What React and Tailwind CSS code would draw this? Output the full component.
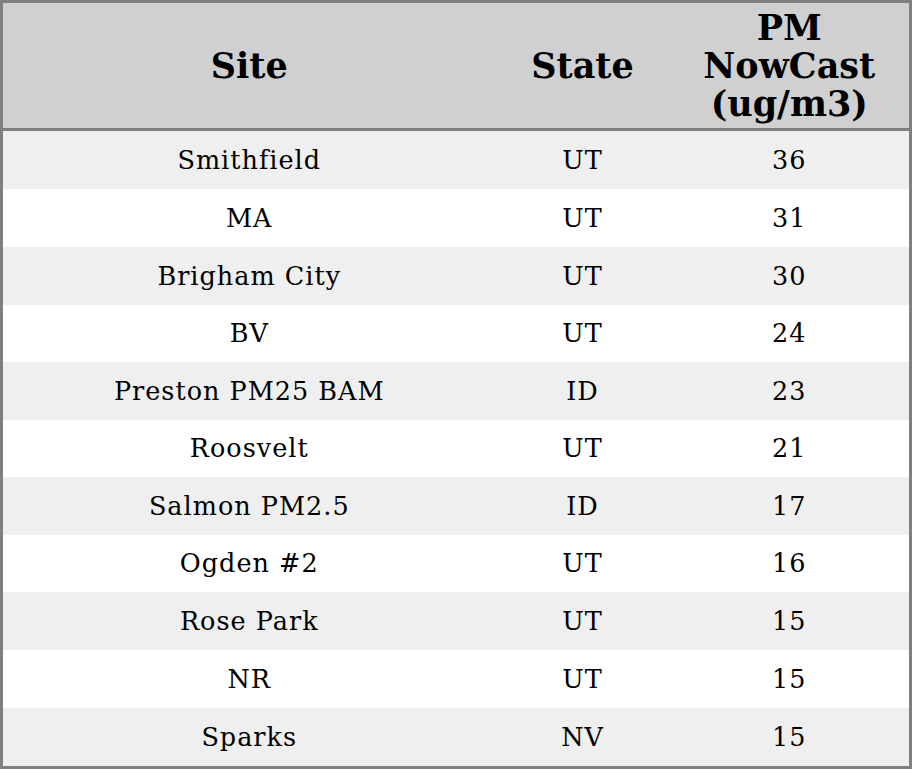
import React from 'react';

const rows = [
  ['Smithfield', 'UT', 36],
  ['MA', 'UT', 31],
  ['Brigham City', 'UT', 30],
  ['BV', 'UT', 24],
  ['Preston PM25 BAM', 'ID', 23],
  ['Roosvelt', 'UT', 21],
  ['Salmon PM2.5', 'ID', 17],
  ['Ogden #2', 'UT', 16],
  ['Rose Park', 'UT', 15],
  ['NR', 'UT', 15],
  ['Sparks', 'NV', 15],
];

export default function App() {
  return (
    <div className="w-[912px] h-[769px] bg-white font-['DejaVu_Serif',serif] text-black">
      <table className="w-full h-full border-[3px] border-[#808080] border-collapse">
        <thead>
          <tr className="bg-[#d0d0d0] h-[128px] border-b-[3px] border-[#808080]">
            <th className="w-[494px] text-[35px] font-bold leading-[38px]">Site</th>
            <th className="w-[174px] text-[35px] font-bold leading-[38px]">State</th>
            <th className="text-[35px] font-bold leading-[38px]">
              PM
              <br />
              NowCast
              <br />
              (ug/m3)
            </th>
          </tr>
        </thead>
        <tbody>
          {rows.map(([site, state, value], i) => (
            <tr key={site} className={i % 2 === 0 ? 'bg-[#efefef]' : 'bg-white'}>
              <td className="text-center text-[25.5px] tracking-[1px]">{site}</td>
              <td className="text-center text-[25.5px] tracking-[1px]">{state}</td>
              <td className="text-center text-[25.5px] tracking-[1px]">{value}</td>
            </tr>
          ))}
        </tbody>
      </table>
    </div>
  );
}
